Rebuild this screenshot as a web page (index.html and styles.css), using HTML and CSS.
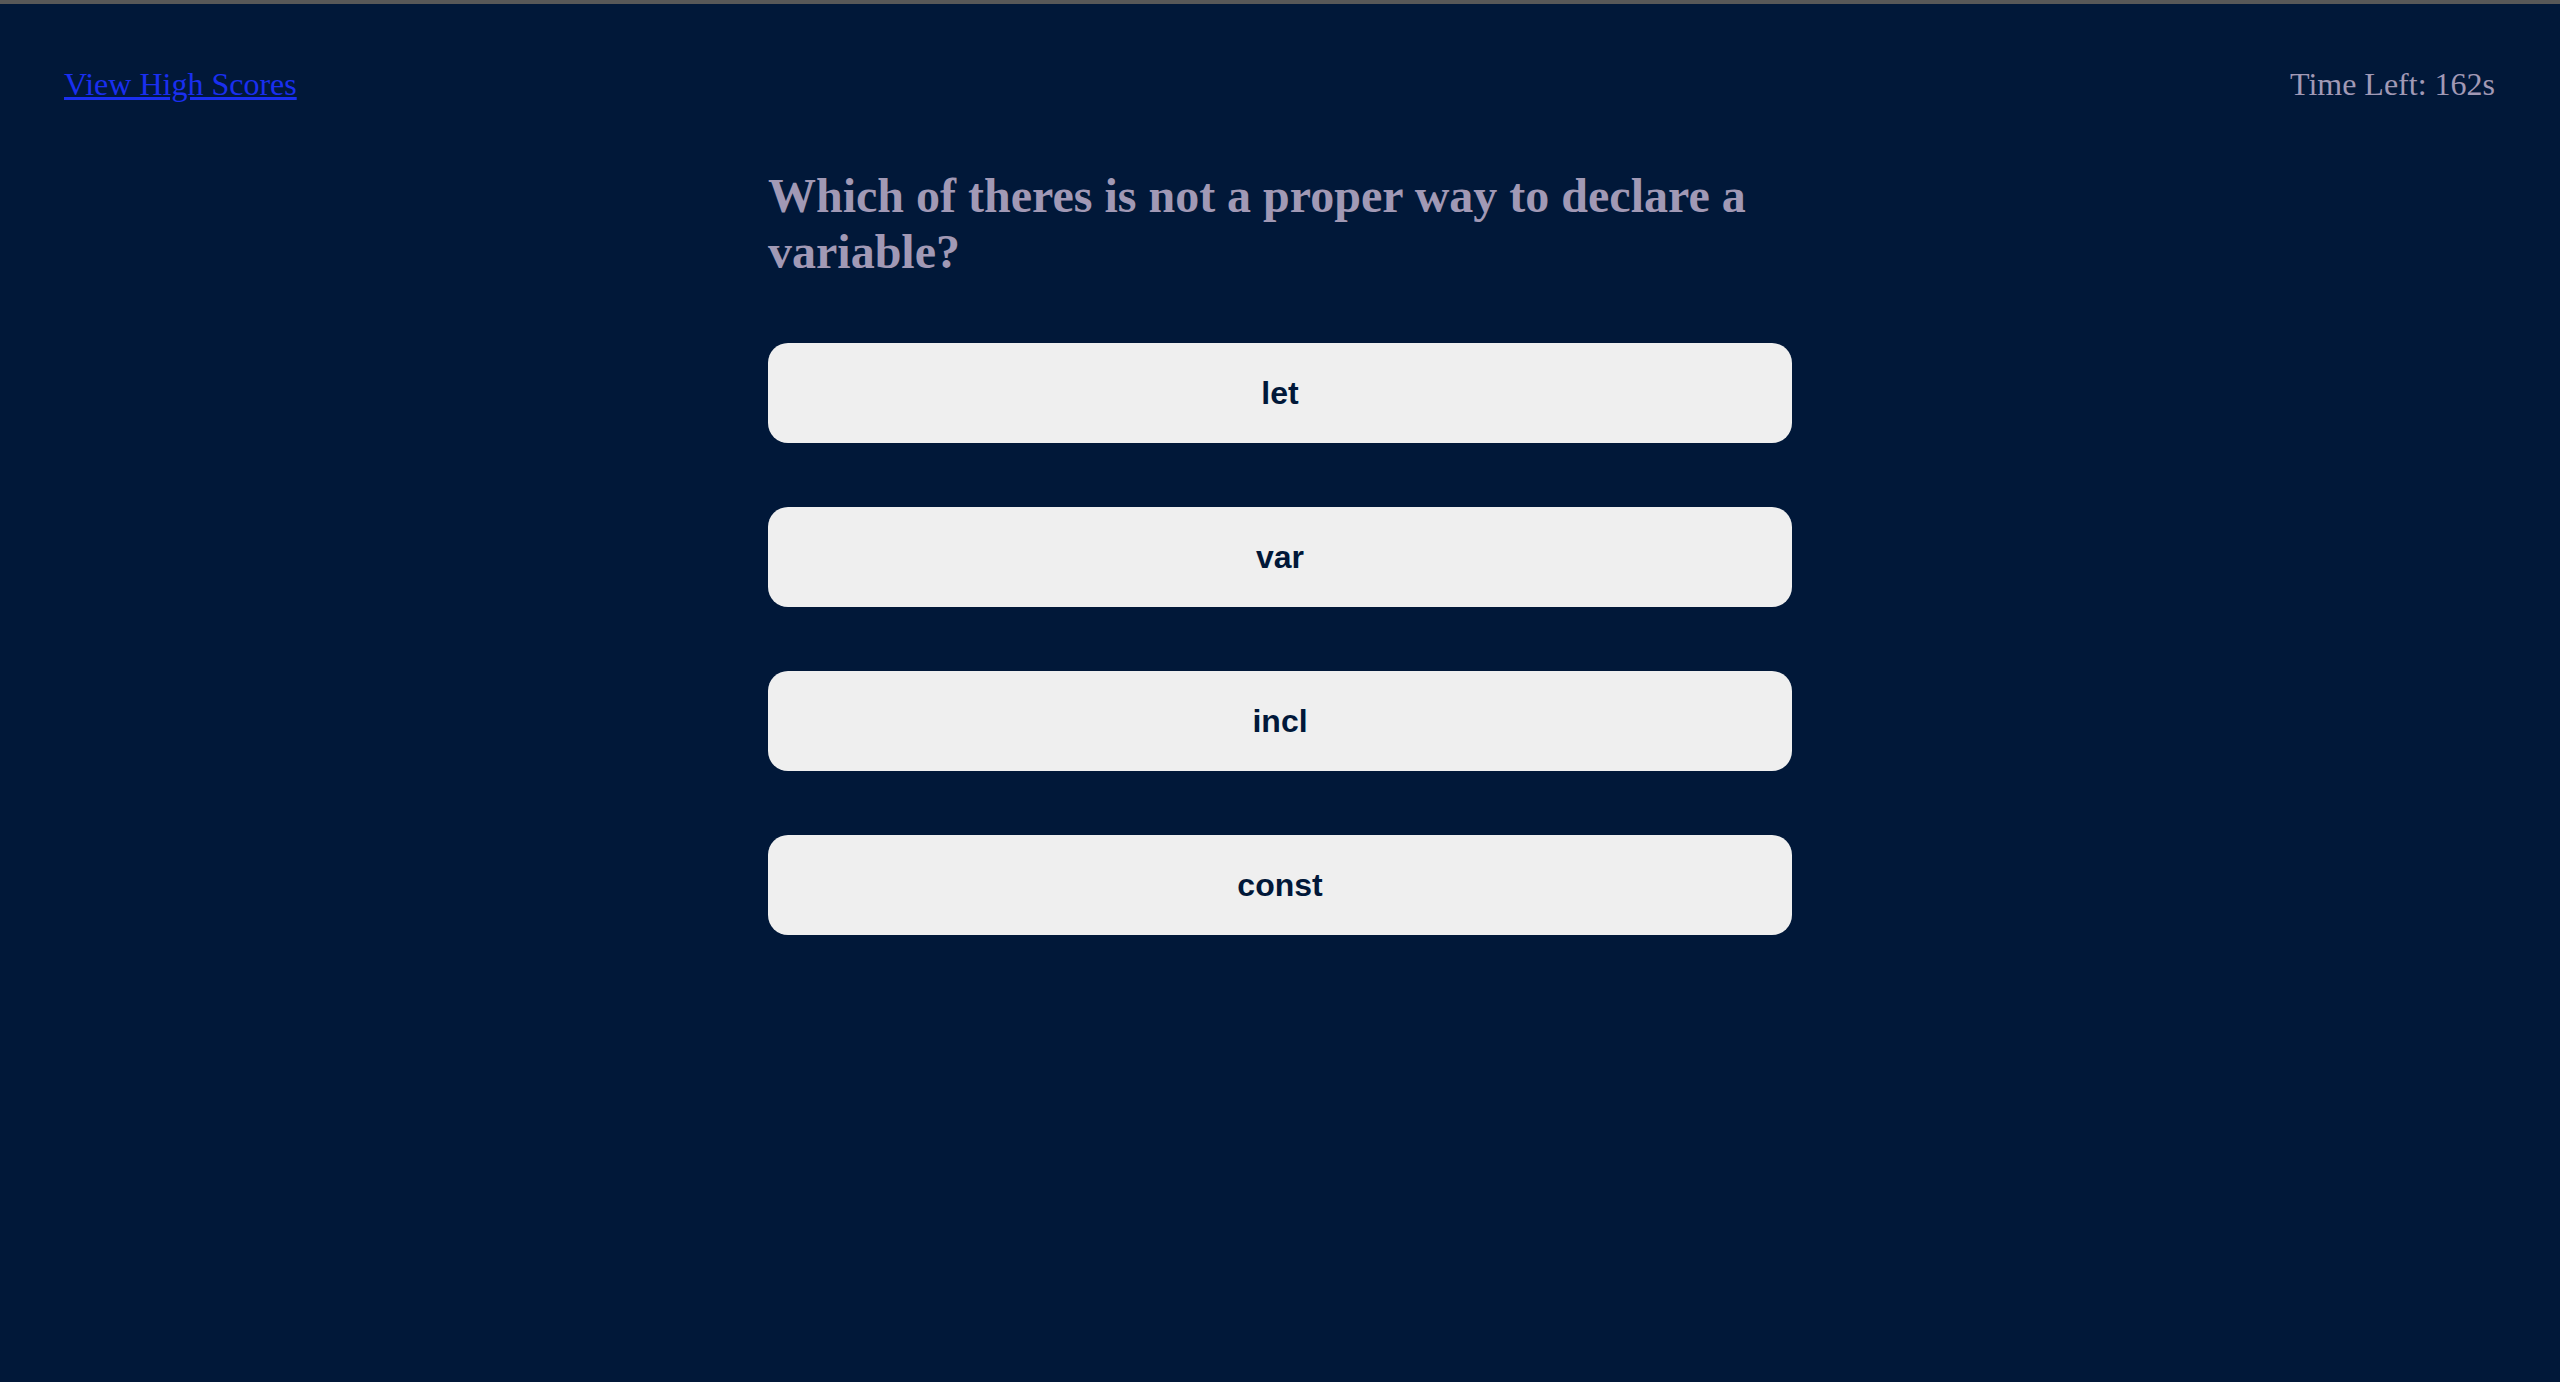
FILE: index.html
```html
<!DOCTYPE html>
<html>
<head>
<meta charset="utf-8">
<link rel="stylesheet" href="styles.css">
</head>
<body>
<div class="topline"></div>
<header class="header">
  <a class="scores" href="#">View High Scores</a>
  <span class="timer">Time Left: 162s</span>
</header>
<main class="quiz">
  <h2 class="question">Which of theres is not a proper way to declare a variable?</h2>
  <div class="choices">
    <button class="choice">let</button>
    <button class="choice">var</button>
    <button class="choice">incl</button>
    <button class="choice">const</button>
  </div>
</main>
</body>
</html>
```

FILE: styles.css
```css
html, body {
  margin: 0;
  padding: 0;
  height: 100%;
}
body {
  background: #011839;
  font-family: "Liberation Serif", "Times New Roman", serif;
  overflow: hidden;
}
.topline {
  height: 4px;
  background: #585858;
}
.header {
  display: flex;
  justify-content: space-between;
  align-items: baseline;
  padding: 62px 65px 0 64px;
  font-size: 32px;
  line-height: 37px;
}
.scores {
  color: #1a2ff0;
  text-decoration: underline;
}
.timer {
  color: #a199b5;
}
.quiz {
  width: 1024px;
  margin: 65px auto 0;
}
.question {
  margin: 0;
  font-size: 48px;
  line-height: 56px;
  font-weight: bold;
  color: #a199b5;
}
.choices {
  display: flex;
  flex-direction: column;
  gap: 64px;
  margin-top: 63px;
}
.choice {
  height: 100px;
  width: 100%;
  border: none;
  border-radius: 20px;
  background: #efefef;
  color: #011839;
  font-family: "Liberation Sans", Arial, sans-serif;
  font-weight: bold;
  font-size: 32px;
  padding: 0;
}
```
